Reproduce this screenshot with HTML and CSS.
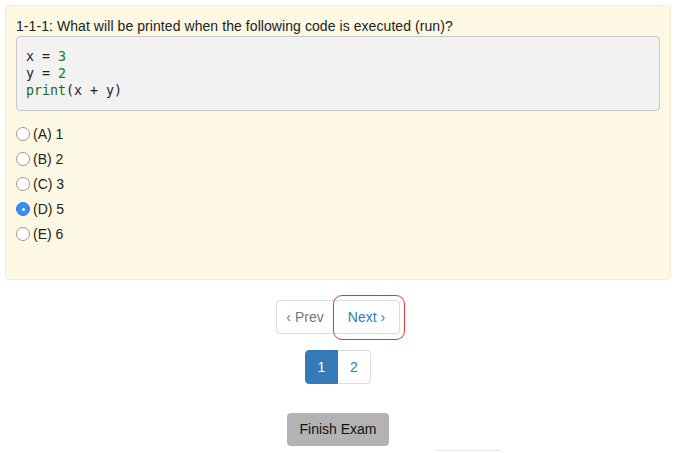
FILE: index.html
```html
<!DOCTYPE html>
<html>
<head>
<meta charset="utf-8">
<link rel="stylesheet" href="styles.css">
</head>
<body>
<div class="page">
  <div class="panel">
    <p class="question">1-1-1: What will be printed when the following code is executed (run)?</p>
    <pre class="code">x = <span class="num">3</span>
y = <span class="num">2</span>
<span class="fn">print</span>(x + y)</pre>
    <div class="options">
      <label class="opt"><span class="radio"></span>(A) 1</label>
      <label class="opt"><span class="radio"></span>(B) 2</label>
      <label class="opt"><span class="radio"></span>(C) 3</label>
      <label class="opt"><span class="radio checked"></span>(D) 5</label>
      <label class="opt"><span class="radio"></span>(E) 6</label>
    </div>
  </div>
  <div class="nav">
    <div class="pager">
      <span class="pbtn prev">&lsaquo; Prev</span>
      <span class="pbtn next">Next &rsaquo;<span class="highlight"></span></span>
    </div>
    <div class="pages">
      <span class="pg active">1</span>
      <span class="pg">2</span>
    </div>
    <div class="finish">Finish Exam</div>
    <div class="more"><span class="stub"></span></div>
  </div>
</div>
</body>
</html>
```
FILE: styles.css
```css
html, body { margin: 0; padding: 0; background: #fff; }
body { font-family: "Liberation Sans", Arial, sans-serif; font-size: 14px; color: #333; overflow: hidden; height: 453px; }
.page { padding: 5px 12px 0 5px; }
.panel {
  background: #fcf8e3;
  border: 1px solid #faebcc;
  border-radius: 4px;
  padding: 11px 10px 0 10px;
  height: 262px;
}
.question { margin: 0; line-height: 19px; color: #222; letter-spacing: 0.07px; }
.code {
  margin: 0;
  background: #f2f2f2;
  border: 1px solid #c8c8c8;
  border-radius: 4px;
  padding: 11px 9px 11px 9px;
  font-family: "DejaVu Sans Mono", monospace;
  font-size: 13.3px;
  line-height: 17px;
  color: #222;
}
.num { color: #1a7c2e; }
.fn { color: #1a6b1a; }
.options { margin-top: 13px; display: flex; flex-direction: column; gap: 5px; }
.opt { display: flex; align-items: center; height: 20px; color: #222; }
.radio {
  width: 14px; height: 14px;
  border: 1px solid #9a9a9a;
  border-radius: 50%;
  background: #fff;
  margin-right: 3px;
  box-sizing: border-box;
  position: relative;
}
.radio.checked { background: #3a8cf5; border-color: #2f7fe8; }
.radio.checked::after {
  content: ""; position: absolute; left: 4.5px; top: 4.5px;
  width: 3px; height: 3px; border-radius: 50%; background: #fff;
}
.nav { display: flex; flex-direction: column; align-items: center; }
.pager { display: flex; margin-top: 20px; }
.pbtn {
  display: block; height: 34px; line-height: 32px; box-sizing: border-box;
  border: 1px solid #ddd; padding: 0 12px; color: #337ab7; background: #fff;
  position: relative;
}
.prev { color: #777; border-radius: 4px 0 0 4px; width: 58px; padding: 0; text-align: center; }
.next { border-radius: 0 4px 4px 0; border-left: 0; width: 66px; padding: 0; text-align: center; }
.highlight {
  position: absolute; left: -1px; top: -6px; width: 72px; height: 45px;
  border: 1.5px solid #e8323a; border-radius: 9px; box-sizing: border-box;
}
.pages { display: flex; margin-top: 16px; }
.pg {
  display: block; width: 33px; height: 34px; line-height: 32px; text-align: center;
  box-sizing: border-box; border: 1px solid #ddd; color: #337ab7; background: #fff;
}
.pg.active { background: #337ab7; border-color: #337ab7; color: #fff; border-radius: 4px 0 0 4px; }
.pg + .pg { border-left: 0; border-radius: 0 4px 4px 0; }
.finish {
  margin-top: 29px; background: #b3b3b3; color: #111; border-radius: 4px;
  width: 102px; height: 33px; line-height: 33px; text-align: center;
}
.more { width: 100%; display: flex; justify-content: flex-start; padding-left: 432px; box-sizing: border-box; margin-top: 4px; }
.stub { display: block; width: 63px; height: 2px; border-top: 1px solid #e4e4e4; }
```
